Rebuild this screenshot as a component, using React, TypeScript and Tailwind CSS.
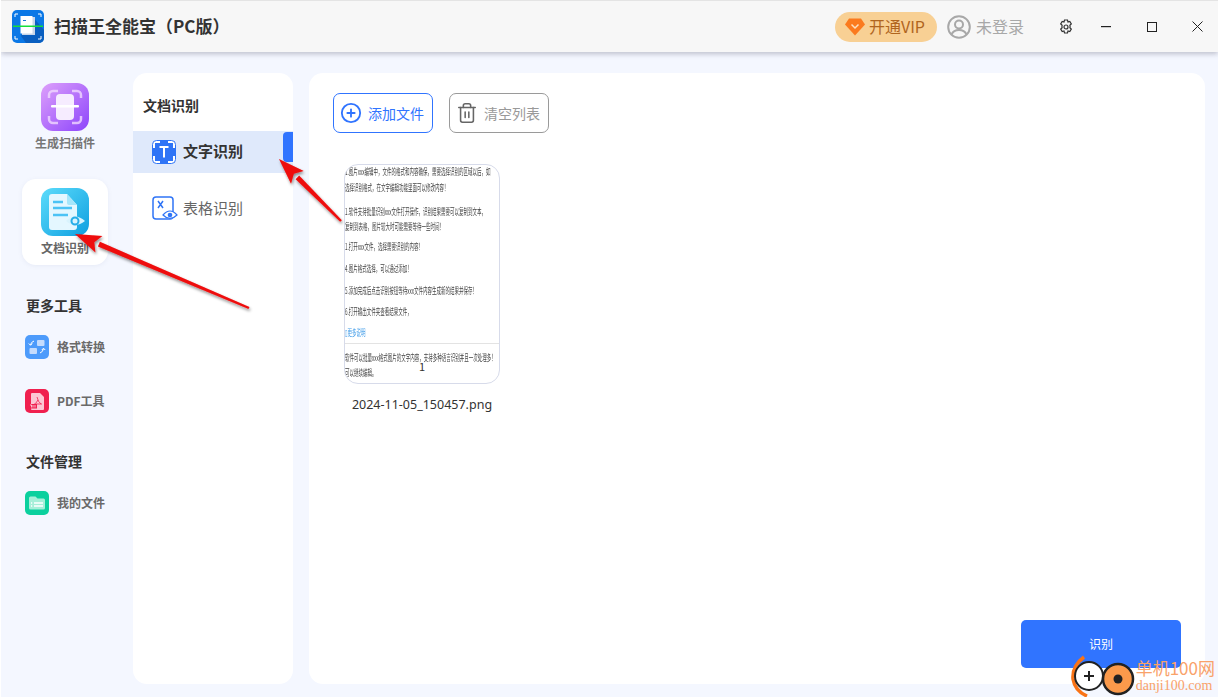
import { CirclePlus, Trash2 } from 'lucide-react';

function AppLogo() {
  return (
    <svg width="32" height="33" viewBox="0 0 32 33" className="shrink-0">
      <rect width="32" height="33" rx="5" fill="#0b78e6" />
      <path d="M20 6 L32 20 V28 a5 5 0 0 1 -5 5 H14 L9 26 Z" fill="#0a5fc0" />
      <rect x="10" y="7" width="13" height="18" fill="#c9d6e8" />
      <rect x="8.5" y="6" width="12" height="17.500" fill="#ffffff" />
      <rect x="11" y="10" width="3" height="1" fill="#1976d8" />
      <path d="M3 4v3M3 4h3M29 4v3M29 4h-3M3 29v-3M3 29h3M29 29v-3M29 29h-3" stroke="#fff" strokeWidth="1" fill="none" />
      <rect x="1" y="15.500" width="30" height="1.500" fill="#16e03a" />
    </svg>
  );
}

function ScanIcon() {
  return (
    <svg width="48" height="48" viewBox="0 0 48 48">
      <defs>
        <linearGradient id="sg" x1="0" y1="0" x2="1" y2="1">
          <stop offset="0" stopColor="#dda0fb" />
          <stop offset="1" stopColor="#8d45fb" />
        </linearGradient>
      </defs>
      <rect width="48" height="48" rx="12" fill="url(#sg)" />
      <path d="M8 15v-3a4 4 0 0 1 4-4h5M31 8h5a4 4 0 0 1 4 4v3M8 33v3a4 4 0 0 0 4 4h5M31 40h5a4 4 0 0 0 4-4v-3" stroke="#f0d8ff" strokeOpacity="0.8" strokeWidth="2.500" fill="none" />
      <rect x="15" y="11" width="18" height="26" rx="4" fill="#f6ecff" />
      <rect x="10" y="22" width="28" height="2.500" rx="1" fill="#ffffff" />
    </svg>
  );
}

function DocIcon() {
  return (
    <svg width="48" height="48" viewBox="0 0 48 48">
      <defs>
        <linearGradient id="dg" x1="0" y1="0" x2="1" y2="1">
          <stop offset="0" stopColor="#5cdcfb" />
          <stop offset="1" stopColor="#0f9fe0" />
        </linearGradient>
      </defs>
      <rect width="48" height="48" rx="12" fill="url(#dg)" />
      <path d="M8 9a3 3 0 0 1 3-3h15l10 11v22a3 3 0 0 1-3 3H11a3 3 0 0 1-3-3Z" fill="#e4f7ff" />
      <path d="M26 6l10 11h-8a2 2 0 0 1-2-2Z" fill="#a5e6fb" />
      <path d="M12 14h10M12 20h19M12 27h15" stroke="#4cc3f5" strokeWidth="2.500" />
      <path d="M25 33q9-9 19 0q-10 8-19 0Z" fill="#d9f3fd" />
      <circle cx="34" cy="33" r="3.500" fill="none" stroke="#27aee8" strokeWidth="2" />
    </svg>
  );
}

function ConvertIcon() {
  return (
    <svg width="24" height="24" viewBox="0 0 24 24">
      <rect width="24" height="24" rx="5" fill="#4d9bfb" />
      <rect x="12" y="5" width="7.500" height="6" rx="1" fill="#c5dcfd" />
      <rect x="4.500" y="13" width="7.500" height="6" rx="1" fill="#c5dcfd" />
      <path d="M9 6q-3 1-3.500 4M3.800 8.500l1.700 1.800 1.700-1.800M15 18q3-1 3.500-4.500M16.800 15l1.700-1.800 1.700 1.800" stroke="#fff" strokeWidth="1" fill="none" />
    </svg>
  );
}

function PdfIcon() {
  return (
    <svg width="24" height="24" viewBox="0 0 24 24">
      <rect width="24" height="24" rx="5" fill="#f0204f" />
      <path d="M6 5a1 1 0 0 1 1-1h8l4 4v12a1 1 0 0 1-1 1H7a1 1 0 0 1-1-1Z" fill="#fcc7d4" />
      <path d="M12 8q1 5 4 7M8 16q3-1 5-5M11 15h6" stroke="#f0204f" strokeWidth="0.800" fill="none" />
      <rect x="4" y="15" width="8" height="4.500" fill="#f0204f" />
      <path d="M5 16h1.500v2.500M8 16v2.500M10 16v2.500" stroke="#fff" strokeWidth="0.700" fill="none" />
    </svg>
  );
}

function FolderIcon() {
  return (
    <svg width="24" height="24" viewBox="0 0 24 24">
      <rect width="24" height="24" rx="5" fill="#0bd09e" />
      <path d="M4 7a1.500 1.500 0 0 1 1.500-1.500h5l2 2h6A1.500 1.500 0 0 1 20 9v8a1.500 1.500 0 0 1-1.500 1.500h-13A1.500 1.500 0 0 1 4 17Z" fill="#a6efd9" />
      <path d="M6 12h1.200M9 12h9M6 15h1.200M9 15h9" stroke="#fff" strokeWidth="1.300" />
    </svg>
  );
}

function TextOcrIcon() {
  return (
    <svg width="24" height="24" viewBox="0 0 24 24">
      <rect x="0.500" y="0.500" width="23" height="23" rx="4" fill="#ffffff" stroke="#2f74f6" />
      <rect x="3" y="3" width="18" height="18" fill="#2f74f6" />
      <rect x="0.500" y="8" width="23" height="8" fill="#2f74f6" />
      <rect x="8" y="0.500" width="8" height="23" fill="#2f74f6" />
      <path d="M7.500 7h9M12 7v10.500" stroke="#fff" strokeWidth="2" />
    </svg>
  );
}

function TableOcrIcon() {
  return (
    <svg width="26" height="24" viewBox="0 0 26 24">
      <rect x="1" y="1" width="20" height="22" rx="3" fill="none" stroke="#2f74f6" strokeWidth="1.500" />
      <path d="M6 5l5 7M11 5l-5 7" stroke="#2f74f6" strokeWidth="1.500" />
      <path d="M11 19q7-8 14 0q-7 7-14 0Z" fill="#ffffff" stroke="#2f74f6" strokeWidth="1.200" />
      <circle cx="18" cy="19" r="2.300" fill="#2f74f6" />
    </svg>
  );
}

function GemIcon() {
  return (
    <svg width="20" height="18" viewBox="0 0 20 18">
      <path d="M4 0.500h12l4 6-10 11-10-11Z" fill="#fb7a1e" />
      <path d="M6.500 6.500l3.500 3.500 3.500-3.500" stroke="#fde0c0" strokeWidth="1.500" fill="none" />
    </svg>
  );
}

function UserIcon() {
  return (
    <svg width="24" height="24" viewBox="0 0 24 24" fill="none" stroke="#a8a8a8" strokeWidth="2">
      <circle cx="12" cy="12" r="10.800" />
      <circle cx="12" cy="9.500" r="4" />
      <path d="M4.500 19.500q2-4.500 7.500-4.500t7.500 4.500" />
    </svg>
  );
}

function GearIcon() {
  return (
    <svg width="16" height="16" viewBox="0 0 16 16" fill="none" stroke="#333" strokeWidth="1.200">
      <path d="M6.500 1h3l.5 2 1.800-.6 1.500 2.600-1.400 1.300a4 4 0 0 1 0 2.400l1.400 1.300-1.500 2.600-1.800-.6-.5 2h-3l-.5-2-1.800.6-1.500-2.600 1.400-1.300a4 4 0 0 1 0-2.400L2.700 5l1.500-2.600L6 3Z" />
      <circle cx="8" cy="8" r="2" />
    </svg>
  );
}

function TitleBar() {
  return (
    <header className="relative z-10 flex h-[52px] shrink-0 items-center border-t border-[#e4e4e4] bg-[#f7f7f7] pl-[11px] shadow-[0_2px_5px_rgba(90,90,110,0.35)]">
      <AppLogo />
      <h1 className="ml-[10px] pb-[2px] text-[17px] font-bold leading-none text-[#333] font-['Noto_Sans_CJK_SC',sans-serif]">扫描王全能宝（PC版）</h1>
      <div className="ml-auto flex items-center">
        <div className="flex h-[30px] w-[102px] items-center gap-[4px] rounded-full bg-[#f8d094] pl-[10px]">
          <GemIcon />
          <span className="pb-[2px] text-[16px] leading-none text-[#b0651e] font-['Noto_Sans_CJK_SC',sans-serif]">开通VIP</span>
        </div>
        <div className="ml-[10px] flex items-center gap-[5px]">
          <UserIcon />
          <span className="pb-[2px] text-[16px] leading-none text-[#a8a8a8] font-['Noto_Sans_CJK_SC',sans-serif]">未登录</span>
        </div>
        <div className="ml-[34px]"><GearIcon /></div>
        <svg width="10" height="2" viewBox="0 0 10 2" className="ml-[27px]"><rect width="10" height="1.200" fill="#222" /></svg>
        <svg width="10" height="10" viewBox="0 0 10 10" className="ml-[36px]"><rect x="0.500" y="0.500" width="9" height="9" fill="none" stroke="#222" /></svg>
        <svg width="11" height="11" viewBox="0 0 11 11" className="ml-[35px] mr-[15px]"><path d="M0.500 0.500l10 10M10.500 0.500l-10 10" stroke="#222" /></svg>
      </div>
    </header>
  );
}

function ToolRow({ icon, label }: { icon: React.ReactNode; label: string }) {
  return (
    <div className="flex items-center gap-2">
      {icon}
      <span className="text-[12px] font-bold leading-none text-[#6a6a6a] font-['Noto_Sans_CJK_SC',sans-serif]">{label}</span>
    </div>
  );
}

function Sidebar() {
  return (
    <aside className="flex w-[132px] shrink-0 flex-col pt-[31px]">
      <div className="flex w-[130px] flex-col items-center pr-[2px]">
        <ScanIcon />
        <span className="mt-[4px] text-[12px] font-bold leading-[16px] text-[#777] font-['Noto_Sans_CJK_SC',sans-serif]">生成扫描件</span>
      </div>
      <div className="ml-[21px] mt-[28px] flex h-[86px] w-[86px] flex-col items-center rounded-[14px] bg-white pt-[9px] shadow-[0_1px_4px_rgba(120,130,170,0.1)]">
        <DocIcon />
        <span className="mt-[4px] text-[12px] font-bold leading-[16px] text-[#666] font-['Noto_Sans_CJK_SC',sans-serif]">文档识别</span>
      </div>
      <h3 className="ml-[25px] mt-[31px] text-[14px] font-bold leading-[18px] text-[#333] font-['Noto_Sans_CJK_SC',sans-serif]">更多工具</h3>
      <div className="ml-[24px] mt-[21px]"><ToolRow icon={<ConvertIcon />} label="格式转换" /></div>
      <div className="ml-[24px] mt-[30px]"><ToolRow icon={<PdfIcon />} label="PDF工具" /></div>
      <h3 className="ml-[25px] mt-[39px] text-[14px] font-bold leading-[18px] text-[#333] font-['Noto_Sans_CJK_SC',sans-serif]">文件管理</h3>
      <div className="ml-[24px] mt-[21px]"><ToolRow icon={<FolderIcon />} label="我的文件" /></div>
    </aside>
  );
}

function SubPanel() {
  return (
    <nav className="mt-[21px] mb-[13px] w-[160px] shrink-0 rounded-[14px] bg-white pt-[23px]">
      <h2 className="ml-[10px] text-[14px] font-bold leading-[18px] text-[#333] font-['Noto_Sans_CJK_SC',sans-serif]">文档识别</h2>
      <div className="relative mt-[17px] flex h-[42px] items-center gap-[7px] bg-[#dfe9fb] pl-[19px]">
        <TextOcrIcon />
        <span className="pb-[3px] text-[15px] font-bold leading-none text-[#333] font-['Noto_Sans_CJK_SC',sans-serif]">文字识别</span>
        <div className="absolute right-0 top-[1px] h-[30px] w-[10px] rounded-l-[4px] bg-[#3074ff]" />
      </div>
      <div className="mt-[12px] flex h-[46px] items-center gap-[5px] pl-[19px]">
        <TableOcrIcon />
        <span className="pb-[2px] text-[15px] leading-none text-[#666] font-['Noto_Sans_CJK_SC',sans-serif]">表格识别</span>
      </div>
    </nav>
  );
}

const docLines = [
  { t: '1.图片xxx编辑中，文件的格式和内容确保，需要选择识别的区域以后，如', g: 'mt-[0px]' },
  { t: '选择识别格式，在文字编辑功能里面可以修改内容！', g: 'mt-[5px]' },
  { t: '1.软件支持批量识别xxx文件打开操作，识别结果需要可以复制到文本，', g: 'mt-[13px]' },
  { t: '复制到表格，图片较大时可能需要等待一些时间！', g: 'mt-[4px]' },
  { t: '1.打开xxx文件，选择需要识别的内容！', g: 'mt-[9px]' },
  { t: '4.图片格式选择，可以通过添加！', g: 'mt-[11px]' },
  { t: '5.添加完成后点击识别按钮等待xxx文件内容生成新的结果并保存！', g: 'mt-[11px]' },
  { t: '6.打开输出文件夹查看结果文件，', g: 'mt-[10px]' },
];

function Thumbnail() {
  return (
    <div className="relative h-[220px] w-[156px] overflow-hidden rounded-[14px] border border-[#d7dbea] bg-white pt-[1px] font-['Noto_Sans_CJK_SC',sans-serif]">
      <div className="blur-[0.3px]">
        {docLines.map((l, i) => (
          <p key={i} className={`${l.g} w-[308px] origin-left scale-x-50 whitespace-nowrap text-[9px] leading-[11px] text-[#444]`}>{l.t}</p>
        ))}
        <p className="mt-[10px] w-[308px] origin-left scale-x-50 whitespace-nowrap text-[9px] leading-[11px] text-[#3f9be8]">▯更多说明</p>
      </div>
      <div className="mt-[5px] border-t border-[#e3e3e3]" />
      <div className="blur-[0.3px]">
        <p className="mt-[8px] w-[308px] origin-left scale-x-50 whitespace-nowrap text-[9px] leading-[11px] text-[#444]">软件可以批量xxx格式图片的文字内容，支持多种语言识别并且一次处理多！</p>
        <p className="mt-[4px] w-[308px] origin-left scale-x-50 whitespace-nowrap text-[9px] leading-[11px] text-[#444]">可以继续编辑。</p>
      </div>
      <span className="absolute left-[74px] top-[195px] text-[11px] leading-[12px] text-[#333]">1</span>
    </div>
  );
}

function MainPanel() {
  return (
    <main className="relative ml-[16px] mr-[13px] mt-[21px] mb-[13px] flex flex-1 flex-col rounded-[14px] bg-white pl-[24px] pt-[20px]">
      <div className="flex gap-4">
        <button className="flex h-[40px] w-[100px] items-center gap-[6px] rounded-[7px] border border-[#3074ff] pl-[6px]">
          <CirclePlus size={22} strokeWidth={2} className="text-[#3074ff]" />
          <span className="pb-[1px] text-[14px] leading-none text-[#3074ff] font-['Noto_Sans_CJK_SC',sans-serif]">添加文件</span>
        </button>
        <button className="flex h-[40px] w-[100px] items-center gap-[6px] rounded-[7px] border border-[#9a9a9a] pl-[6px]">
          <Trash2 size={22} strokeWidth={1.7} className="text-[#666]" />
          <span className="pb-[1px] text-[14px] leading-none text-[#999] font-['Noto_Sans_CJK_SC',sans-serif]">清空列表</span>
        </button>
      </div>
      <div className="ml-[11px] mt-[31px] flex w-[156px] flex-col items-center">
        <Thumbnail />
        <span className="mt-[13px] whitespace-nowrap text-[12.500px] leading-[16px] text-[#333] font-['Noto_Sans',sans-serif]">2024-11-05_150457.png</span>
      </div>
      <button className="absolute bottom-[16px] right-[24px] flex h-[48px] w-[160px] items-center justify-center rounded-[5px] bg-[#3074ff] text-[12px] text-white font-['Noto_Sans_CJK_SC',sans-serif]">识别</button>
    </main>
  );
}

function Arrows() {
  // red annotation arrows drawn over the screenshot
  const arrows = [
    { x1: 248, y1: 308, x2: 74, y2: 234 },
    { x1: 340, y1: 221, x2: 278, y2: 159 },
  ];
  return (
    <svg width="1218" height="697" viewBox="0 0 1218 697" className="pointer-events-none absolute left-0 top-0 z-20">
      <defs>
        <filter id="as" x="-20%" y="-20%" width="140%" height="140%">
          <feDropShadow dx="1" dy="2" stdDeviation="1.500" floodColor="#000" floodOpacity="0.45" />
        </filter>
      </defs>
      {arrows.map((a, i) => {
        const ang = Math.atan2(a.y1 - a.y2, a.x1 - a.x2);
        const len = 26;
        const w = 9;
        const bx = a.x2 + Math.cos(ang) * len;
        const by = a.y2 + Math.sin(ang) * len;
        const nx = -Math.sin(ang);
        const ny = Math.cos(ang);
        return (
          <g key={i} filter="url(#as)">
            <path d={`M${a.x1 - nx * 1.200} ${a.y1 - ny * 1.200} L${a.x1 + nx * 1.200} ${a.y1 + ny * 1.200} L${bx + nx * 2.500} ${by + ny * 2.500} L${bx - nx * 2.500} ${by - ny * 2.500} Z`} fill="#ee0a0a" />
            <path d={`M${a.x2} ${a.y2} L${bx + nx * w} ${by + ny * w} L${bx - Math.cos(ang) * 5} ${by - Math.sin(ang) * 5} L${bx - nx * w} ${by - ny * w} Z`} fill="#ee0a0a" />
          </g>
        );
      })}
    </svg>
  );
}

function Watermark() {
  return (
    <div className="absolute bottom-0 right-[3px] z-30 flex h-[42px] items-end">
      <svg width="64" height="42" viewBox="0 0 64 42">
        <path d="M13 2q-12 9-11 22q2 12 14 17" stroke="#f97316" strokeWidth="3.500" fill="none" />
        <circle cx="18" cy="21" r="14" fill="#ffffff" stroke="#222" strokeWidth="2" />
        <path d="M13 21h10M18 16v10" stroke="#222" strokeWidth="2" />
        <circle cx="47" cy="24" r="15" fill="#fb9a4b" stroke="#222" strokeWidth="2.500" />
        <circle cx="47" cy="24" r="4.500" fill="#222" />
      </svg>
      <div className="ml-[1px] flex flex-col items-start pb-[3px] leading-none text-[#f9a26a]">
        <span className="text-[17px] leading-[20px] font-['Noto_Sans_CJK_SC',sans-serif]">单机100网</span>
        <span className="text-[14px] leading-[16px] font-['Liberation_Serif',serif]">danji100.com</span>
      </div>
    </div>
  );
}

export default function App() {
  return (
    <div className="relative flex h-[697px] w-[1218px] flex-col overflow-hidden border-l border-white bg-[#f4f7ff]">
      <TitleBar />
      <div className="flex min-h-0 flex-1">
        <Sidebar />
        <SubPanel />
        <MainPanel />
      </div>
      <Arrows />
      <Watermark />
    </div>
  );
}
